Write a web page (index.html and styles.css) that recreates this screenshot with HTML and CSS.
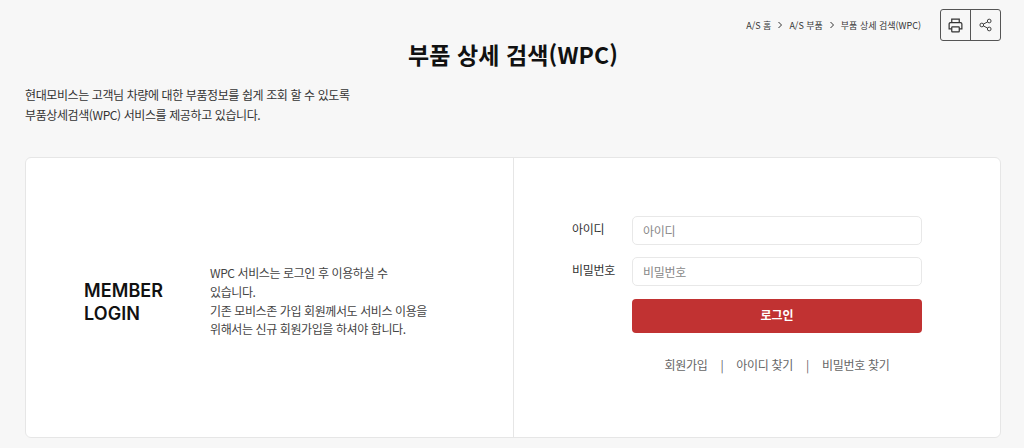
FILE: index.html
```html
<!DOCTYPE html>
<html lang="ko">

<head>
  <title>부품 상세 검색(WPC)</title>
  <meta charset="UTF-8">
  <meta name="viewport" content="width=device-width, initial-scale=1">
  <link rel="stylesheet" href="styles.css">
</head>

<body>
  <div class="top">
    <div class="crumbs">
      <span>A/S 홈</span>
      <svg class="chev" viewBox="0 0 6 8"><path d="M1.5 1L4.5 4L1.5 7" /></svg>
      <span>A/S 부품</span>
      <svg class="chev" viewBox="0 0 6 8"><path d="M1.5 1L4.5 4L1.5 7" /></svg>
      <span>부품 상세 검색(WPC)</span>
    </div>
    <div class="tools">
      <button class="tool tool-print">
        <svg width="15" height="15" viewBox="0 0 16 16">
          <path d="M4 5V1.2H12V5" />
          <path d="M4 11.5H1.2V6.5Q1.2 5 2.7 5H13.3Q14.8 5 14.8 6.5V11.5H12" />
          <rect x="4" y="9.5" width="8" height="5.3" rx="0.6" />
        </svg>
      </button>
      <button class="tool tool-share">
        <svg width="13" height="14" viewBox="0 0 14 14">
          <circle cx="11" cy="2.7" r="2" />
          <circle cx="3" cy="7" r="2" />
          <circle cx="11" cy="11.3" r="2" />
          <path d="M4.8 6L9.2 3.7M4.8 8L9.2 10.3" />
        </svg>
      </button>
    </div>
  </div>

  <h1 class="title">부품 상세 검색(WPC)</h1>

  <p class="intro">현대모비스는 고객님 차량에 대한 부품정보를 쉽게 조회 할 수 있도록<br>부품상세검색(WPC) 서비스를 제공하고 있습니다.</p>

  <div class="card">
    <div class="left">
      <h2 class="member">MEMBER<br>LOGIN</h2>
      <p class="notice">WPC 서비스는 로그인 후 이용하실 수 있습니다.<br>기존 모비스존 가입 회원께서도 서비스 이용을 위해서는 신규 회원가입을 하셔야 합니다.</p>
    </div>
    <div class="right">
      <form class="login">
        <label class="label" for="uid">아이디</label>
        <input class="field" id="uid" type="text" placeholder="아이디">
        <label class="label" for="upw">비밀번호</label>
        <input class="field" id="upw" type="text" placeholder="비밀번호">
        <button class="submit" type="button">로그인</button>
      </form>
      <div class="links">
        <a>회원가입</a><i>|</i><a>아이디 찾기</a><i>|</i><a>비밀번호 찾기</a>
      </div>
    </div>
  </div>
</body>

</html>
```

FILE: styles.css
```css
* {
  box-sizing: border-box;
}

body {
  margin: 0;
  height: 448px;
  overflow: hidden;
  padding: 9px 23px 0 25px;
  background-color: #f7f7f7;
  color: #333;
  font-family: "Noto Sans CJK KR", "Noto Sans", sans-serif;
}

/* Breadcrumb and tool buttons */
.top {
  display: flex;
  justify-content: flex-end;
  align-items: center;
  height: 32px;
}

.crumbs {
  display: flex;
  align-items: center;
  gap: 6px;
  margin-right: 19px;
  font-size: 9px;
  color: #333;
}

.chev {
  width: 6px;
  height: 8px;
  fill: none;
  stroke: #333;
  stroke-width: 1;
}

.tools {
  display: flex;
  width: 61px;
  height: 32px;
  border: 1px solid #555;
  border-radius: 3px;
}

.tool {
  display: flex;
  align-items: center;
  justify-content: center;
  padding: 0;
  border: 0;
  background: none;
}

.tool svg {
  fill: none;
  stroke: #333;
  stroke-width: 1.3;
}

.tool-print {
  width: 30px;
  border-right: 1px solid #555;
}

.tool-share {
  flex: 1;
}

.tool-share svg {
  stroke-width: 1;
}

/* Title */
.title {
  margin: -3px 0 0;
  text-align: center;
  font-size: 23px;
  line-height: 32px;
  font-weight: 700;
  letter-spacing: 0.1px;
  color: #111;
}

.intro {
  margin: 15px 0 0;
  font-size: 12px;
  line-height: 20px;
  letter-spacing: -0.4px;
  color: #333;
}

/* Login card */
.card {
  display: flex;
  height: 281px;
  margin-top: 32px;
  background-color: #fff;
  border: 1px solid #e6e6e6;
  border-radius: 6px;
}

.left {
  display: flex;
  align-items: center;
  width: 488px;
  padding: 8px 0 0 58px;
  border-right: 1px solid #e6e6e6;
}

.member {
  width: 126px;
  margin: 0;
  font-family: Inter, sans-serif;
  font-size: 18px;
  line-height: 23px;
  font-weight: 600;
  letter-spacing: 0.1px;
  color: #111;
}

.notice {
  width: 222px;
  margin: 0;
  font-size: 12px;
  line-height: 18.7px;
  letter-spacing: -0.4px;
  word-break: keep-all;
  color: #444;
}

.right {
  flex: 1;
  padding: 58px 78px 0 58px;
}

.login {
  display: grid;
  grid-template-columns: 60px 290px;
  row-gap: 12px;
}

.label {
  padding-top: 5px;
  font-size: 12px;
  line-height: 16px;
  letter-spacing: -0.3px;
  color: #333;
}

.field {
  height: 29px;
  padding: 0 10px;
  border: 1px solid #e8e8e8;
  border-radius: 5px;
  background: #fff;
  font-family: inherit;
  font-size: 12px;
  letter-spacing: -0.3px;
}

.field::placeholder {
  color: #888;
}

.submit {
  grid-column: 2;
  height: 34px;
  margin-top: 1px;
  padding: 0 0 3px;
  border: 0;
  border-radius: 4px;
  background-color: #c13232;
  color: #fff;
  font-family: inherit;
  font-size: 12px;
  font-weight: 700;
}

.links {
  display: flex;
  gap: 13px;
  justify-content: center;
  margin: 23px 0 0 60px;
  font-size: 12px;
  line-height: 18px;
  letter-spacing: -0.3px;
  color: #666;
}

.links i {
  font-style: normal;
}
```
